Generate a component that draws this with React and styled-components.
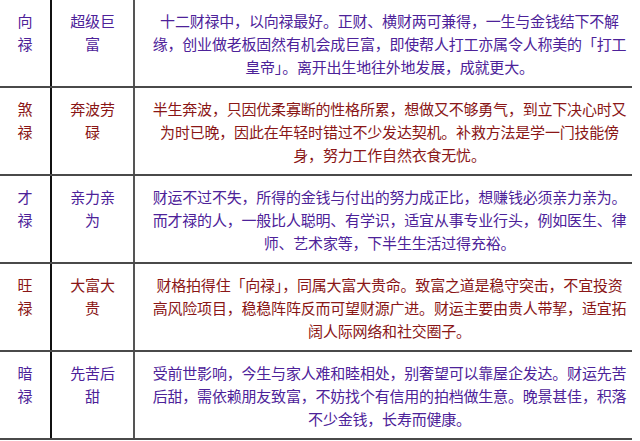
import React from "react";
import styled, { createGlobalStyle } from "styled-components";

const GlobalStyle = createGlobalStyle`
  body {
    margin: 0;
    background: #ffffff;
    font-family: "Noto Sans CJK SC", "Noto Sans", sans-serif;
  }
`;

const Table = styled.div`
  width: 632px;
  display: flex;
  flex-direction: column;
`;

const Row = styled.div`
  display: grid;
  grid-template-columns: 52px 83px 1fr;
  height: 88px;
  box-sizing: border-box;
  border-bottom: 2px solid #4a4a4a;
  color: ${(props) => (props.tone === "red" ? "#8a1616" : "#4d2299")};
  font-size: 15px;
  line-height: 23px;
  letter-spacing: -0.2px;
`;

const Cell = styled.div`
  padding-top: 9px;
  text-align: center;
  box-sizing: border-box;
`;

const NameCell = styled(Cell)`
  border-right: 2px solid #111111;
`;

const TitleCell = styled(Cell)`
  border-right: 2px solid #555555;
`;

const DescCell = styled(Cell)`
  padding-left: 14px;
  padding-right: 2px;
`;

const Line = styled.div`
  white-space: nowrap;
`;

const rows = [
  {
    tone: "purple",
    name: ["向", "禄"],
    title: ["超级巨", "富"],
    desc: [
      "十二财禄中，以向禄最好。正财、横财两可兼得，一生与金钱结下不解",
      "缘，创业做老板固然有机会成巨富，即使帮人打工亦属令人称美的「打工",
      "皇帝」。离开出生地往外地发展，成就更大。",
    ],
  },
  {
    tone: "red",
    name: ["煞", "禄"],
    title: ["奔波劳", "碌"],
    desc: [
      "半生奔波，只因优柔寡断的性格所累，想做又不够勇气，到立下决心时又",
      "为时已晚，因此在年轻时错过不少发达契机。补救方法是学一门技能傍",
      "身，努力工作自然衣食无忧。",
    ],
  },
  {
    tone: "purple",
    name: ["才", "禄"],
    title: ["亲力亲", "为"],
    desc: [
      "财运不过不失，所得的金钱与付出的努力成正比，想赚钱必须亲力亲为。",
      "而才禄的人，一般比人聪明、有学识，适宜从事专业行头，例如医生、律",
      "师、艺术家等，下半生生活过得充裕。",
    ],
  },
  {
    tone: "red",
    name: ["旺", "禄"],
    title: ["大富大", "贵"],
    desc: [
      "财格拍得住「向禄」，同属大富大贵命。致富之道是稳守突击，不宜投资",
      "高风险项目，稳稳阵阵反而可望财源广进。财运主要由贵人带挈，适宜拓",
      "阔人际网络和社交圈子。",
    ],
  },
  {
    tone: "purple",
    name: ["暗", "禄"],
    title: ["先苦后", "甜"],
    desc: [
      "受前世影响，今生与家人难和睦相处，别奢望可以靠屋企发达。财运先苦",
      "后甜，需依赖朋友致富，不妨找个有信用的拍档做生意。晚景甚佳，积落",
      "不少金钱，长寿而健康。",
    ],
  },
];

export default function App() {
  return (
    <>
      <GlobalStyle />
      <Table>
        {rows.map((row) => (
          <Row key={row.name.join("")} tone={row.tone}>
            <NameCell>
              {row.name.map((t) => (
                <Line key={t}>{t}</Line>
              ))}
            </NameCell>
            <TitleCell>
              {row.title.map((t) => (
                <Line key={t}>{t}</Line>
              ))}
            </TitleCell>
            <DescCell>
              {row.desc.map((t) => (
                <Line key={t}>{t}</Line>
              ))}
            </DescCell>
          </Row>
        ))}
      </Table>
    </>
  );
}
